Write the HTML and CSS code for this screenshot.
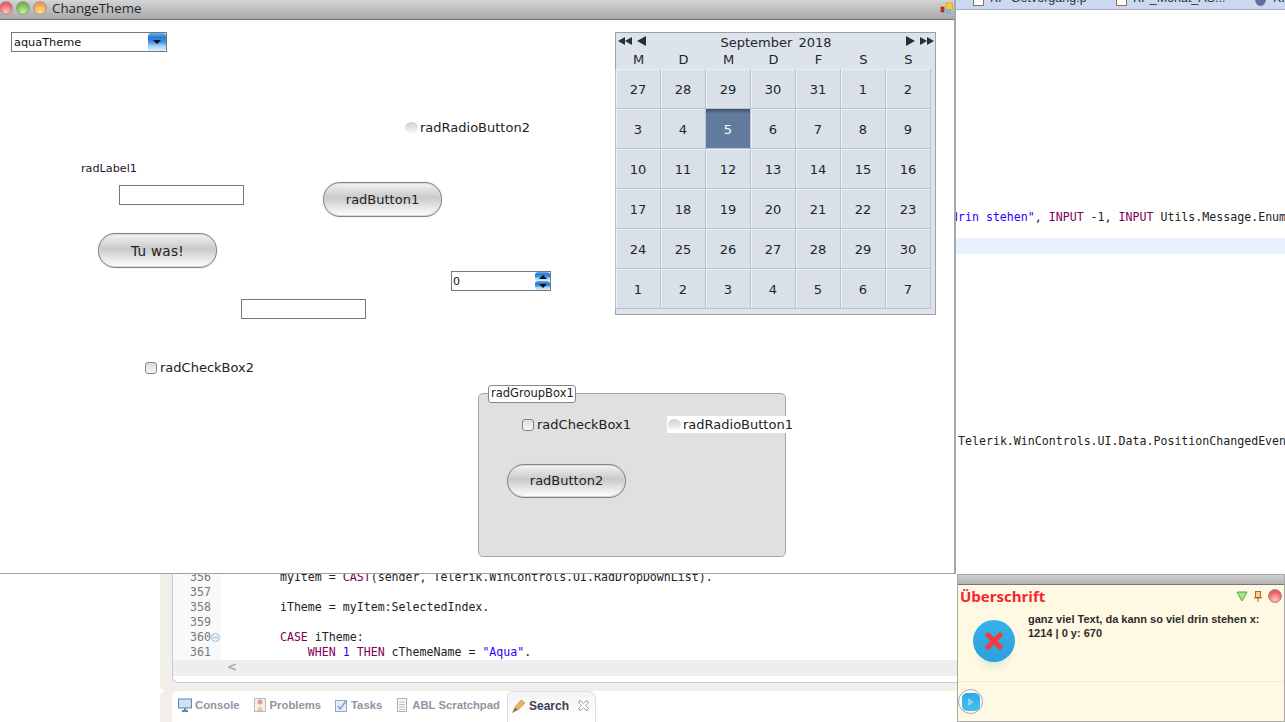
FILE: index.html
```html
<!DOCTYPE html>
<html lang="en">

<head>
  <meta charset="UTF-8">
  <title>ChangeTheme</title>
  <link rel="stylesheet" href="styles.css">
</head>

<body>
  <div class="desktop">

    <!-- ide behind the windows -->
    <div class="ide_tabs">
      <div class="ide_tab tab_1"><span class="file_icon"></span>KP-Getvorgang.p</div>
      <div class="ide_tab tab_2"><span class="file_icon"></span>KP_Monat_AS...</div>
      <div class="ide_tab tab_3"><span class="ball_icon"></span>KI</div>
    </div>
    <div class="cur_line"></div>
    <div class="far_code line_a"><span class="str">drin stehen"</span>, <span class="kw">INPUT</span> -1, <span class="kw">INPUT</span> Utils.Message.Enum</div>
    <div class="far_code line_b">Telerik.WinControls.UI.Data.PositionChangedEven</div>

    <div class="editor">
      <div class="code">
        <div class="row"><span class="num">356</span><span class="src">    myItem = <span class="kw">CAST</span>(sender, Telerik.WinControls.UI.RadDropDownList).</span></div>
        <div class="row"><span class="num">357</span><span class="src"></span></div>
        <div class="row"><span class="num">358</span><span class="src">    iTheme = myItem:SelectedIndex.</span></div>
        <div class="row"><span class="num">359</span><span class="src"></span></div>
        <div class="row"><span class="num">360</span><span class="fold"></span><span class="src">    <span class="kw">CASE</span> iTheme:</span></div>
        <div class="row"><span class="num">361</span><span class="src">        <span class="kw">WHEN</span> <span class="lit">1</span> <span class="kw">THEN</span> cThemeName = <span class="str">"Aqua"</span>.</span></div>
      </div>
      <div class="scrollbar"><span class="scroll_arrow">&lt;</span></div>
    </div>

    <div class="views">
      <div class="view"><svg class="view_icon" viewBox="0 0 16 16"><rect x="1.5" y="2" width="13" height="9" fill="#cfe0f2" stroke="#5d86b3"/><path d="M5 14h6M8 11v3" stroke="#5d86b3" stroke-width="2"/></svg>Console</div>
      <div class="view"><svg class="view_icon" viewBox="0 0 16 16"><rect x="2.5" y="1.5" width="11" height="13" fill="#f4f1ea" stroke="#b9b9c6"/><circle cx="8" cy="5" r="2.5" fill="#e89a9a"/><path d="M8 9l3 5H5z" fill="#e8c77e"/></svg>Problems</div>
      <div class="view"><svg class="view_icon" viewBox="0 0 16 16"><rect x="2.5" y="3.5" width="11" height="11" fill="#e6eef8" stroke="#8fa9cc"/><path d="M5 9l2 3 6-8" fill="none" stroke="#7d9fc9" stroke-width="1.5"/></svg>Tasks</div>
      <div class="view"><svg class="view_icon" viewBox="0 0 16 16"><rect x="3.500" y="1.500" width="9" height="13" fill="#f7f7f7" stroke="#a9b2bd"/><path d="M5 5h6M5 7.500h6M5 10h6M5 12.500h6" stroke="#b9c2cc"/></svg>ABL Scratchpad</div>
      <div class="view view_on">
        <svg class="view_icon" viewBox="0 0 16 16"><path d="M1 15l3-6 3 3z" fill="#8a7a4a"/><path d="M4 9l6-7 4 3-7 7z" fill="#e2b65a" stroke="#a9853a" stroke-width=".6"/></svg>Search
        <svg class="view_close" viewBox="0 0 11 11"><path d="M1 1l2 0 2.500 2.500 2.500-2.500 2 0 0 2-2.500 2.500 2.500 2.500 0 2-2 0-2.500-2.500-2.500 2.500-2 0 0-2 2.500-2.500-2.500-2.500z" fill="#fff" stroke="#8d8d8d" stroke-width=".8"/></svg>
      </div>
    </div>

    <!-- ChangeTheme window -->
    <div class="window">
      <div class="titlebar">
        <span class="light red"></span>
        <span class="light green"></span>
        <span class="light orange"></span>
        <span class="title">ChangeTheme</span>
        <svg class="tb_icon" viewBox="0 0 13 13"><rect x="6" y="1" width="6.500" height="6.500" fill="#f7c948" stroke="#c89a20" stroke-width=".6"/><rect x="1" y="5" width="3" height="5" fill="#cc3322" stroke="#8f1f14" stroke-width=".6"/><rect x="6" y="8" width="5" height="4" fill="#7fb4ea"/></svg>
      </div>

      <div class="form">
        <div class="combo ctl">
          <span class="combo_text">aquaTheme</span>
          <span class="aqua_btn"><span class="arrow_down"></span></span>
        </div>

        <div class="radio ctl radio2"><span class="radio_dot"></span>radRadioButton2</div>
        <div class="label ctl">radLabel1</div>
        <div class="textbox ctl text1"></div>
        <div class="pill ctl btn1">radButton1</div>
        <div class="pill ctl btn_do">Tu was!</div>

        <div class="spin ctl">
          <span class="spin_val">0</span>
          <span class="spin_btns">
            <span class="aqua_btn spin_btn"><span class="arrow_up"></span></span>
            <span class="aqua_btn spin_btn"><span class="arrow_down"></span></span>
          </span>
        </div>

        <div class="textbox ctl text2"></div>
        <div class="check ctl check2"><span class="check_box"></span>radCheckBox2</div>

        <div class="calendar ctl">
          <div class="cal_head">
            <span class="cal_nav"><span class="tri_l"></span><span class="tri_l"></span><span class="tri_l nav_gap"></span></span>
            <span class="cal_title">September 2018</span>
            <span class="cal_nav"><span class="tri_r nav_gap"></span><span class="tri_r"></span><span class="tri_r"></span></span>
          </div>
          <div class="cal_days">
            <span>M</span><span>D</span><span>M</span><span>D</span><span>F</span><span>S</span><span>S</span>
          </div>
          <div class="cal_grid">
            <span>27</span><span>28</span><span>29</span><span>30</span><span>31</span><span>1</span><span>2</span>
            <span>3</span><span>4</span><span class="cal_sel">5</span><span>6</span><span>7</span><span>8</span><span>9</span>
            <span>10</span><span>11</span><span>12</span><span>13</span><span>14</span><span>15</span><span>16</span>
            <span>17</span><span>18</span><span>19</span><span>20</span><span>21</span><span>22</span><span>23</span>
            <span>24</span><span>25</span><span>26</span><span>27</span><span>28</span><span>29</span><span>30</span>
            <span>1</span><span>2</span><span>3</span><span>4</span><span>5</span><span>6</span><span>7</span>
          </div>
        </div>

        <div class="group ctl">
          <div class="group_title">radGroupBox1</div>
          <div class="check ctl check1"><span class="check_box"></span>radCheckBox1</div>
          <div class="radio ctl radio1"><span class="radio_dot"></span>radRadioButton1</div>
          <div class="pill ctl btn2">radButton2</div>
        </div>
      </div>
    </div>

    <!-- alert window -->
    <div class="alert">
      <div class="alert_bar"></div>
      <div class="alert_body">
        <div class="alert_head">
          <span class="alert_title">Überschrift</span>
          <span class="alert_tools">
            <svg class="tool" viewBox="0 0 12 12"><path d="M1 2h10L6 11z" fill="#a5e58a" stroke="#58a545"/></svg>
            <svg class="tool" viewBox="0 0 12 12"><rect x="3.500" y="1.500" width="5" height="6" fill="#f6d08f" stroke="#a8672e"/><path d="M2 8h8M6 8v4" stroke="#a8672e"/></svg>
            <span class="alert_close"></span>
          </span>
        </div>
        <div class="alert_main">
          <div class="alert_icon">
            <svg class="x_mark" viewBox="0 0 24 24"><path d="M4 7l3-3 5 5 5-5 3 3-5 5 5 5-3 3-5-5-5 5-3-3 5-5z" fill="#f6393f"/></svg>
          </div>
          <div class="alert_text">ganz viel Text, da kann so viel drin stehen x: 1214 | 0 y: 670</div>
        </div>
        <div class="alert_foot">
          <span class="play_btn"><span class="play_inner"><span class="play_tri"></span></span></span>
        </div>
      </div>
    </div>

  </div>
</body>

</html>
```

FILE: styles.css
```css
* {
  box-sizing: border-box;
}

body {
  margin: 0;
  background-color: white;
  font-family: "DejaVu Sans", sans-serif;
  overflow: hidden;
}

.desktop {
  width: 1285px;
  height: 722px;
  position: relative;
  overflow: hidden;
}

/* ide */
.ide_tabs {
  position: absolute;
  left: 956px;
  top: 0;
  width: 329px;
  height: 10px;
  background-color: #ccd8f1;
  border-bottom: 1px solid #a8aec4;
  overflow: hidden;
}

.ide_tab {
  position: absolute;
  top: -9px;
  font: 12.500px "Liberation Sans", sans-serif;
  color: #333;
  white-space: nowrap;
}

.tab_1 {
  left: 17px;
}

.tab_2 {
  left: 160px;
}

.tab_3 {
  left: 299px;
}

.file_icon {
  display: inline-block;
  width: 11px;
  height: 14px;
  margin-right: 6px;
  vertical-align: middle;
  border: 1px solid #8a7a4a;
  background-color: white;
}

.ball_icon {
  display: inline-block;
  width: 11px;
  height: 14px;
  margin-right: 7px;
  vertical-align: middle;
  border-radius: 50%;
  background-color: #6a6a9c;
}

.cur_line {
  position: absolute;
  left: 956px;
  top: 238px;
  width: 329px;
  height: 16px;
  background-color: #e8f2fe;
}

.far_code {
  position: absolute;
  left: 956px;
  font: 11.6px/15px "DejaVu Sans Mono", monospace;
  color: #222;
  white-space: nowrap;
  overflow: hidden;
  width: 329px;
}

.line_a {
  top: 210px;
  text-indent: -5px;
}

.line_b {
  top: 434px;
  padding-left: 2px;
}

.kw {
  color: #7f0055;
}

.str {
  color: #2a00ff;
}

.lit {
  color: #2a00ff;
}

.editor {
  position: absolute;
  left: 172px;
  top: 560px;
  width: 790px;
  height: 123px;
  background-color: white;
  border-left: 1px solid #c0cbe0;
  border-bottom: 1px solid #c0cbe0;
  border-radius: 0 0 0 6px;
  box-shadow: -12px 8px 0 #f2efe8, 0 8px 0 #f2efe8;
}

.code {
  padding-top: 10px;
}

.row {
  height: 15px;
  display: flex;
  font: 11.6px/15px "DejaVu Sans Mono", monospace;
  color: #222;
  white-space: pre;
  position: relative;
}

.num {
  width: 48px;
  padding-left: 17px;
  color: #787878;
  background-color: #f9f9f9;
}

.src {
  padding-left: 31px;
}

.fold {
  position: absolute;
  left: 38px;
  top: 3px;
  width: 9px;
  height: 9px;
  border-radius: 50%;
  border: 1px solid #a9bcd2;
  background: linear-gradient(#a9bcd2, #a9bcd2) center / 5px 1px no-repeat #eef3f8;
}

.scrollbar {
  position: absolute;
  left: 0;
  top: 100px;
  right: 0;
  height: 16px;
  background-color: #eeeeee;
  padding-left: 54px;
  font: bold 12px/15px "DejaVu Sans", sans-serif;
  color: #aaa;
}

.scroll_arrow {
  display: block;
}

.views {
  position: absolute;
  left: 172px;
  top: 691px;
  width: 784px;
  height: 31px;
  display: flex;
  align-items: center;
  gap: 12px;
  padding: 0 0 3px 5px;
  font: bold 11.3px "Liberation Sans", sans-serif;
  color: #8e96a0;
  border-radius: 6px 0 0 0;
  background-color: white;
  box-shadow: -12px 0 0 #f2efe8;
}

.view {
  display: flex;
  align-items: center;
  gap: 2px;
}

.view_icon {
  width: 16px;
  height: 16px;
}

.view_on {
  align-self: flex-start;
  height: 31px;
  margin-left: -5px;
  padding: 0 6px 3px 3px;
  font-size: 12px;
  color: #3c4350;
  border: 1px solid #dbdee6;
  border-bottom: none;
  border-radius: 6px 8px 0 0;
  background: linear-gradient(#f4f4f6, white);
}

.view_close {
  width: 11px;
  height: 11px;
  margin-left: 7px;
}

/* ChangeTheme window */
.window {
  position: absolute;
  left: 0;
  top: 0;
  width: 956px;
  height: 574px;
  background-color: white;
  border-right: 2px solid #a8a8a8;
  border-bottom: 1px solid #a0a0a0;
}

.titlebar {
  height: 20px;
  display: flex;
  align-items: center;
  gap: 3px;
  padding-bottom: 3px;
  background: linear-gradient(#d4d4d4, #a9a9a9);
  border-bottom: 1px solid #777;
}

.light {
  width: 14px;
  height: 14px;
  border-radius: 50%;
  border: 1px solid #999;
}

.red {
  margin-left: -1px;
  background: radial-gradient(circle at 50% 80%, #ffc4c4, #ee5a5a 70%);
}

.green {
  background: radial-gradient(circle at 50% 80%, #c9ee9e, #6bb644 70%);
}

.orange {
  background: radial-gradient(circle at 50% 80%, #ffe29e, #ee9a4a 70%);
}

.title {
  margin-left: 2px;
  font-family: "Open Sans", sans-serif;
  font-size: 13.300px;
  color: #1c2630;
}

.tb_icon {
  width: 13px;
  height: 13px;
  margin-left: auto;
  margin-right: 1px;
}

.form {
  position: relative;
  height: 553px;
}

.ctl {
  position: absolute;
}

.combo {
  left: 11px;
  top: 12px;
  width: 156px;
  height: 20px;
  display: flex;
  align-items: center;
  justify-content: space-between;
  border: 1px solid #777;
  font-size: 11.300px;
  padding-left: 2px;
  color: #111;
}

.aqua_btn {
  width: 18px;
  height: 18px;
  display: flex;
  align-items: center;
  justify-content: center;
  border-radius: 3px;
  background: linear-gradient(#6ab2f0 0, #2a78d0 25%, #3f90e4 50%, #9fd3f8 72%, #dcf1ff 100%);
}

.arrow_down {
  border-left: 4px solid transparent;
  border-right: 4px solid transparent;
  border-top: 4px solid #111;
}

.arrow_up {
  border-left: 4px solid transparent;
  border-right: 4px solid transparent;
  border-bottom: 4px solid #111;
}

.radio,
.check {
  display: flex;
  align-items: center;
  gap: 2px;
  font-size: 13px;
  color: #222;
  white-space: nowrap;
}

.radio_dot {
  width: 13px;
  height: 11px;
  border-radius: 50%;
  background: linear-gradient(#d0d0d0, #f6f6f6);
}

.check_box {
  width: 12px;
  height: 12px;
  margin-right: 1px;
  border: 1px solid #858585;
  border-radius: 3px;
  background: linear-gradient(#dcdcdc, #f6f6f6);
}

.radio2 {
  left: 405px;
  top: 99px;
  height: 17px;
}

.label {
  left: 81px;
  top: 142px;
  font-size: 11.200px;
  color: #2a1030;
}

.textbox {
  height: 20px;
  border: 1px solid #777;
  background-color: white;
}

.text1 {
  left: 119px;
  top: 165px;
  width: 125px;
}

.text2 {
  left: 241px;
  top: 279px;
  width: 125px;
}

.pill {
  width: 119px;
  height: 35px;
  display: flex;
  align-items: center;
  justify-content: center;
  border: 1px solid #848484;
  border-radius: 17px;
  font-size: 13px;
  color: #222;
  background: linear-gradient(#f4f4f4 0, #e0e0e0 20%, #c9c9c9 45%, #e8e8e8 75%, white 100%);
  box-shadow: inset 0 0 0 1px #d8d8d8, 0 0 1px #aaa;
}

.btn1 {
  left: 323px;
  top: 162px;
}

.btn_do {
  left: 98px;
  top: 213px;
  font-size: 13.500px;
  letter-spacing: .3px;
}

.spin {
  left: 451px;
  top: 251px;
  width: 100px;
  height: 20px;
  display: flex;
  justify-content: space-between;
  border: 1px solid #777;
  font-size: 11px;
  line-height: 19px;
  padding-left: 1px;
  color: #111;
}

.spin_btns {
  display: flex;
  flex-direction: column;
}

.spin_btn {
  width: 15px;
  height: 9px;
}

.check2 {
  left: 145px;
  top: 339px;
  height: 17px;
}

/* calendar */
.calendar {
  left: 615px;
  top: 12px;
  width: 321px;
  height: 283px;
  border: 1px solid #a0a0a0;
  background-color: #dde3ea;
  color: #1c2630;
}

.cal_head {
  height: 18px;
  display: flex;
  align-items: center;
  justify-content: space-between;
  padding: 0 1px 0 2px;
}

.cal_title {
  font-size: 13px;
  word-spacing: 2px;
  padding-top: 1px;
}

.cal_nav {
  display: flex;
  align-items: center;
  margin-top: -2px;
}

.tri_l {
  border-top: 4px solid transparent;
  border-bottom: 4px solid transparent;
  border-right: 7px solid #24303c;
}

.tri_r {
  border-top: 4px solid transparent;
  border-bottom: 4px solid transparent;
  border-left: 7px solid #24303c;
}

.tri_l.nav_gap {
  margin-left: 5px;
  border-top-width: 5px;
  border-bottom-width: 5px;
  border-right-width: 9px;
}

.tri_r.nav_gap {
  margin-right: 5px;
  border-top-width: 5px;
  border-bottom-width: 5px;
  border-left-width: 9px;
}

.cal_days {
  height: 18px;
  display: grid;
  grid-template-columns: repeat(7, 45px);
  font-size: 13px;
  line-height: 18px;
  text-align: center;
}

.cal_grid {
  display: grid;
  grid-template-columns: repeat(7, 45px);
  grid-auto-rows: 40px;
  font-size: 13px;
}

.cal_grid span {
  display: flex;
  align-items: center;
  justify-content: center;
  padding-top: 1px;
  background-color: #d9e0e7;
  border-right: 1px solid #b8c4d4;
  border-bottom: 1px solid #b8c4d4;
  box-shadow: inset 1px 1px 0 #eef1f5, -1px 0 0 #b8c4d4;
}

.cal_grid .cal_sel {
  color: white;
  background: linear-gradient(#3c4f68 0, #627b9c 12%, #627b9c 100%);
  box-shadow: none;
}

/* group box */
.group {
  left: 478px;
  top: 373px;
  width: 308px;
  height: 164px;
  background-color: #e0e0e0;
  border: 1px solid #a5a5a5;
  border-radius: 5px;
}

.group_title {
  position: absolute;
  left: 9px;
  top: -9px;
  height: 18px;
  padding: 0 1px 0 2px;
  font-size: 11.500px;
  line-height: 15px;
  color: #222;
  background-color: white;
  border: 1px solid #888;
  border-radius: 3px;
}

.check1 {
  left: 43px;
  top: 22px;
  height: 17px;
}

.radio1 {
  left: 188px;
  top: 22px;
  height: 17px;
  padding: 0 2px 0 1px;
  background-color: white;
}

.btn2 {
  left: 28px;
  top: 70px;
  height: 34px;
  padding-bottom: 2px;
}

/* alert window */
.alert {
  position: absolute;
  left: 957px;
  top: 574px;
  width: 328px;
  height: 148px;
  border: 1px solid #a8a8a8;
  background-color: #fff8e2;
}

.alert_bar {
  height: 10px;
  background: linear-gradient(#d0d0d0, #b4b4b4);
  border-bottom: 1px solid #777;
}

.alert_body {
  height: 136px;
  display: flex;
  flex-direction: column;
}

.alert_head {
  height: 22px;
  display: flex;
  align-items: center;
  justify-content: space-between;
  padding: 0 2px 0 2px;
}

.alert_title {
  font: bold 15px "Open Sans", sans-serif;
  color: #f8242c;
}

.alert_tools {
  display: flex;
  align-items: center;
  gap: 4px;
}

.tool {
  width: 12px;
  height: 12px;
}

.alert_close {
  width: 14px;
  height: 14px;
  border-radius: 50%;
  border: 1px solid #b08a8a;
  background: radial-gradient(circle at 50% 80%, #ffc4c4, #e85a5a 70%);
}

.alert_main {
  flex: 1;
  display: flex;
  gap: 13px;
  padding: 6px 10px 0 15px;
  border-bottom: 1px solid #f3ecd6;
}

.alert_icon {
  width: 42px;
  height: 42px;
  margin-top: 7px;
  flex-shrink: 0;
  display: flex;
  align-items: center;
  justify-content: center;
  border-radius: 50%;
  background: linear-gradient(#33b4ea, #2d9fdc);
  box-shadow: 0 10px 6px -5px #dbe9dd;
}

.x_mark {
  width: 28px;
  height: 28px;
}

.alert_text {
  font: bold 11px/13.500px "Liberation Sans", sans-serif;
  color: #2c2c2c;
}

.alert_foot {
  height: 39px;
  display: flex;
  align-items: center;
}

.play_btn {
  width: 25px;
  height: 25px;
  display: flex;
  align-items: center;
  justify-content: center;
  border-radius: 50%;
  border: 1px solid #a5a5a5;
  background-color: white;
}

.play_inner {
  width: 18px;
  height: 18px;
  display: flex;
  align-items: center;
  justify-content: center;
  border-radius: 5px;
  background: linear-gradient(#2ea8e6, #45bff0);
}

.play_tri {
  border-top: 4px solid transparent;
  border-bottom: 4px solid transparent;
  border-left: 6px solid #8fd0f2;
}
```
